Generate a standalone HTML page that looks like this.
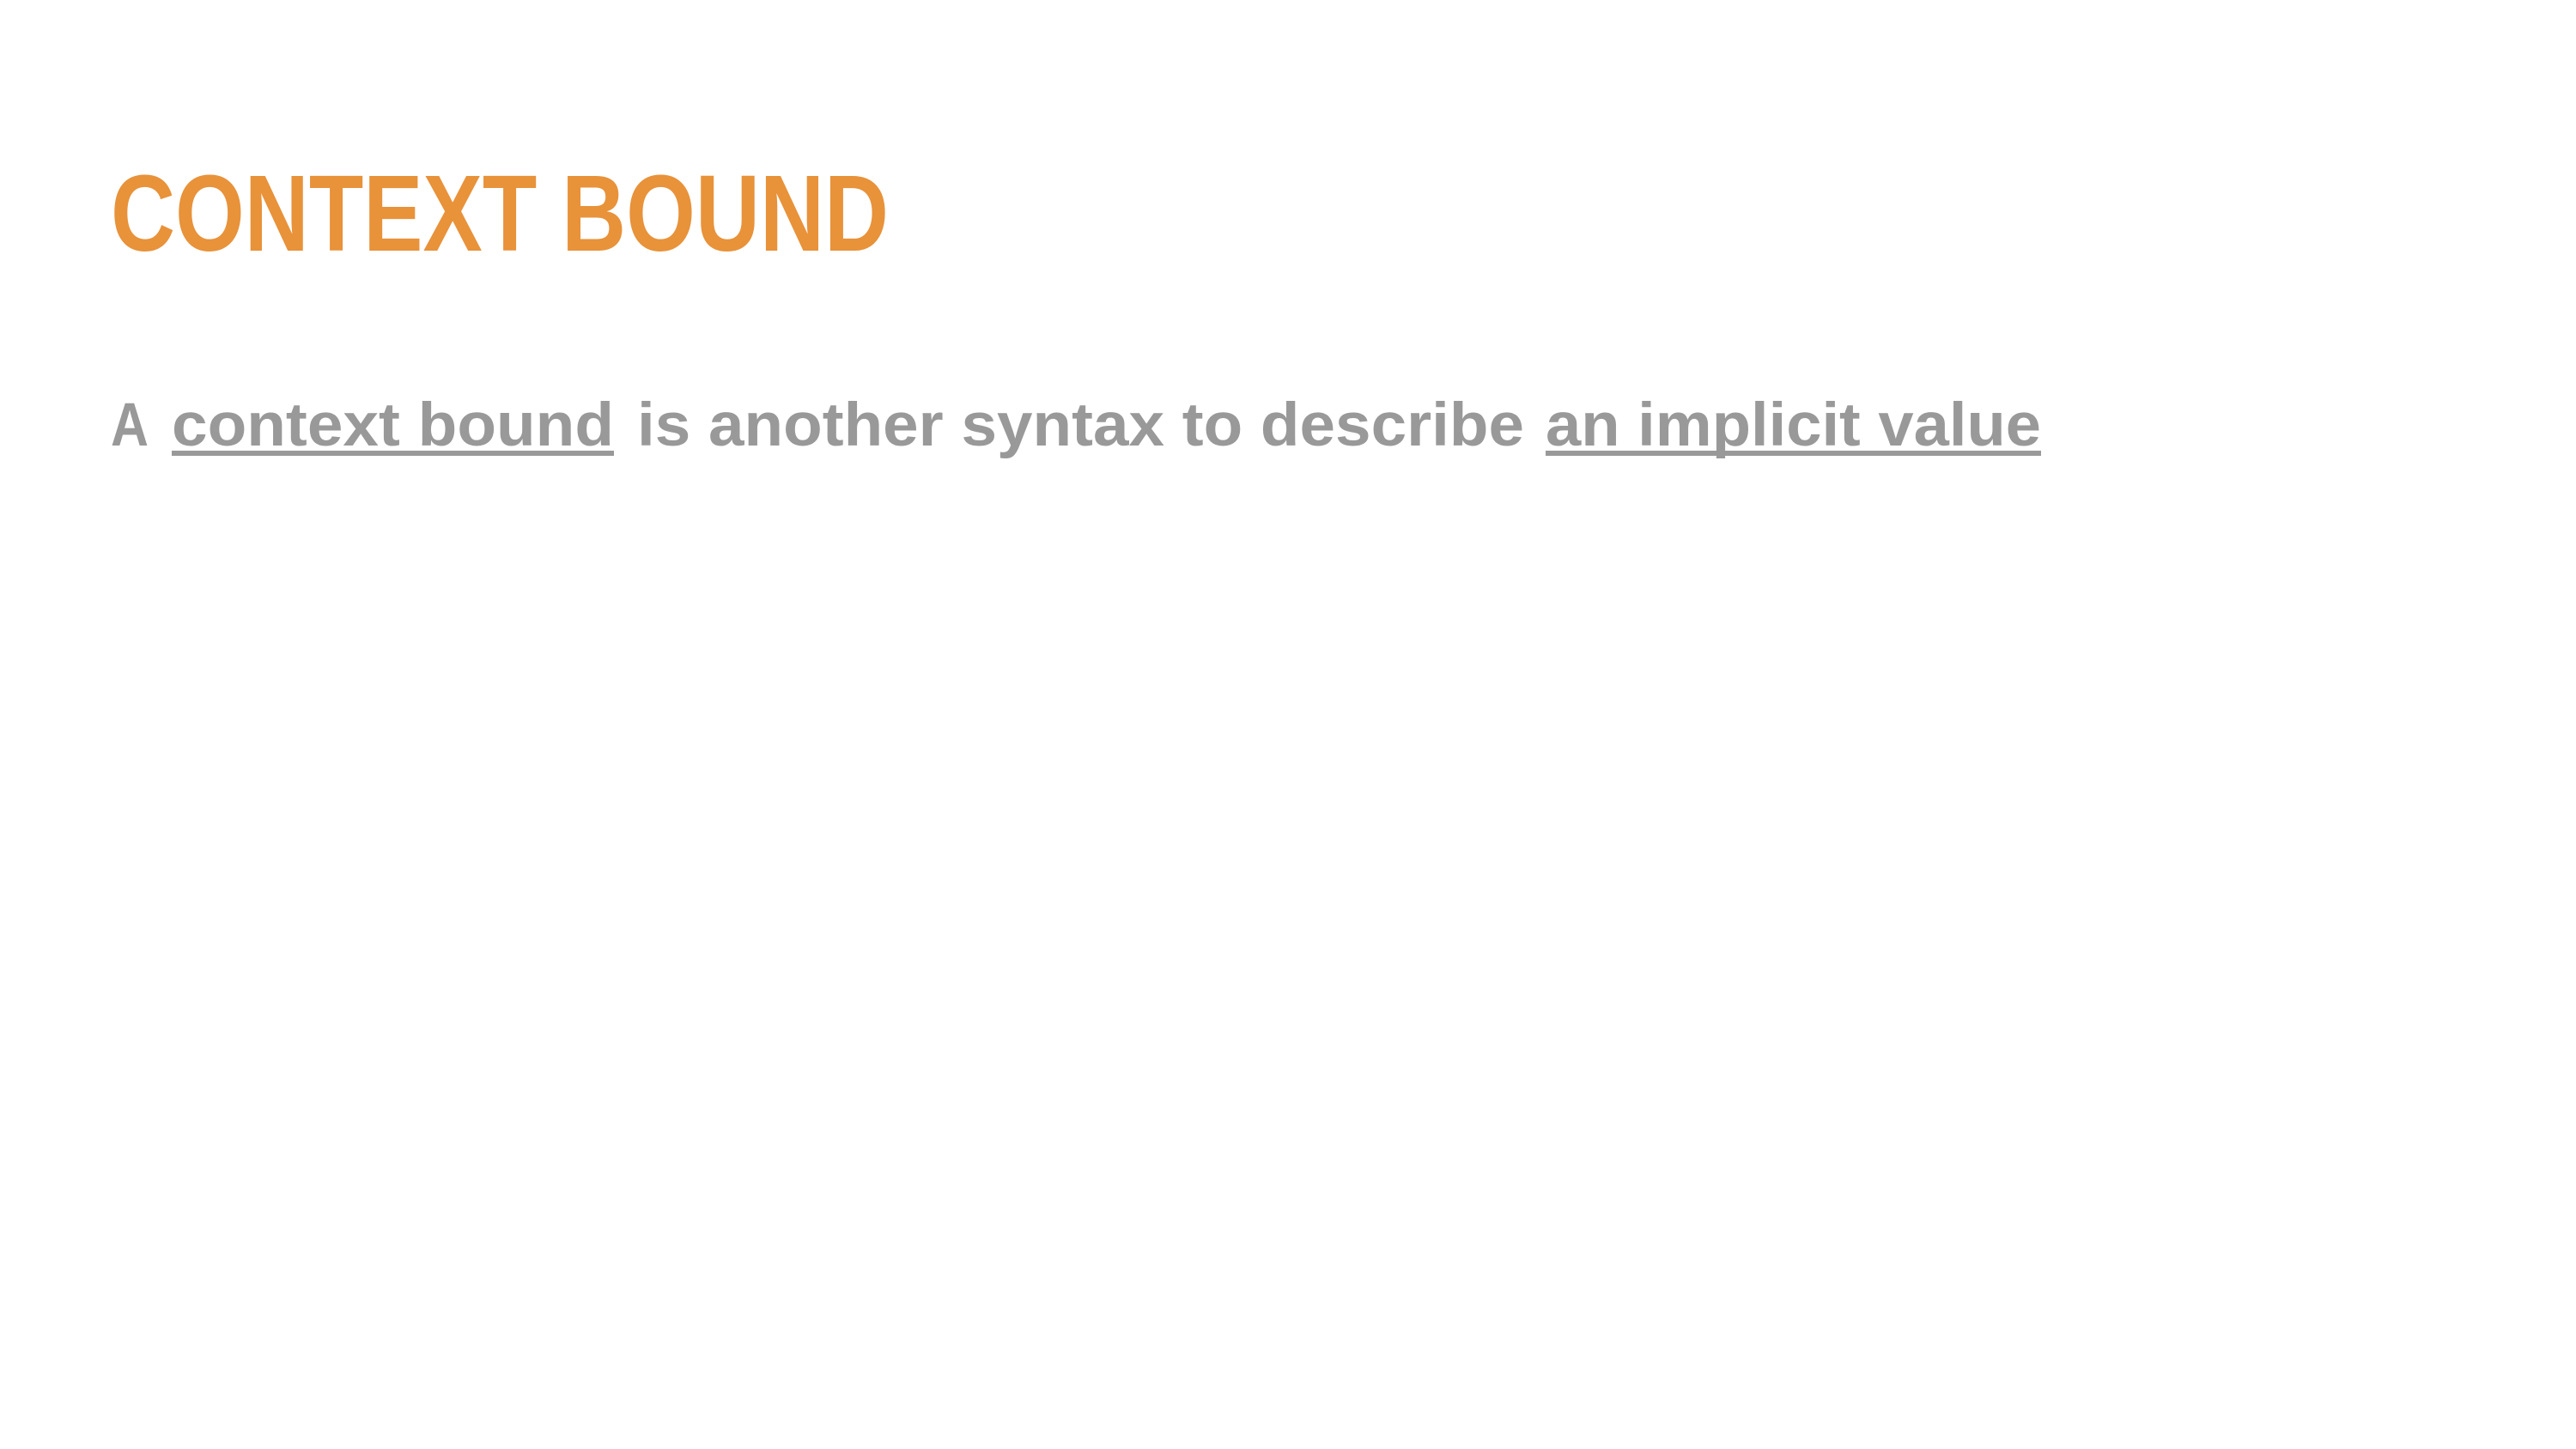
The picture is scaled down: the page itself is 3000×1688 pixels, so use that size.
<!DOCTYPE html>
<html><head><meta charset="utf-8"><style>
html,body{margin:0;padding:0;background:#fff;width:3000px;height:1688px;overflow:hidden}
svg{display:block}
text{font-family:"Liberation Sans",sans-serif;font-weight:bold}
</style></head><body>
<svg width="3000" height="1688" viewBox="0 0 3000 1688">
<text x="129" y="292" font-size="126" fill="#E8923A" textLength="906" lengthAdjust="spacingAndGlyphs">CONTEXT BOUND</text>
<g fill="#999999" font-size="71">
<text x="129" y="519" textLength="44" lengthAdjust="spacingAndGlyphs">A</text>
<text x="200" y="519" textLength="515" lengthAdjust="spacingAndGlyphs">context bound</text>
<text x="742" y="519" textLength="1033" lengthAdjust="spacingAndGlyphs">is another syntax to describe</text>
<text x="1800" y="519" textLength="577" lengthAdjust="spacingAndGlyphs">an implicit value</text>
<rect x="200" y="525" width="515" height="6"/>
<rect x="1800" y="525" width="577" height="6"/>
</g>
</svg>
</body></html>
